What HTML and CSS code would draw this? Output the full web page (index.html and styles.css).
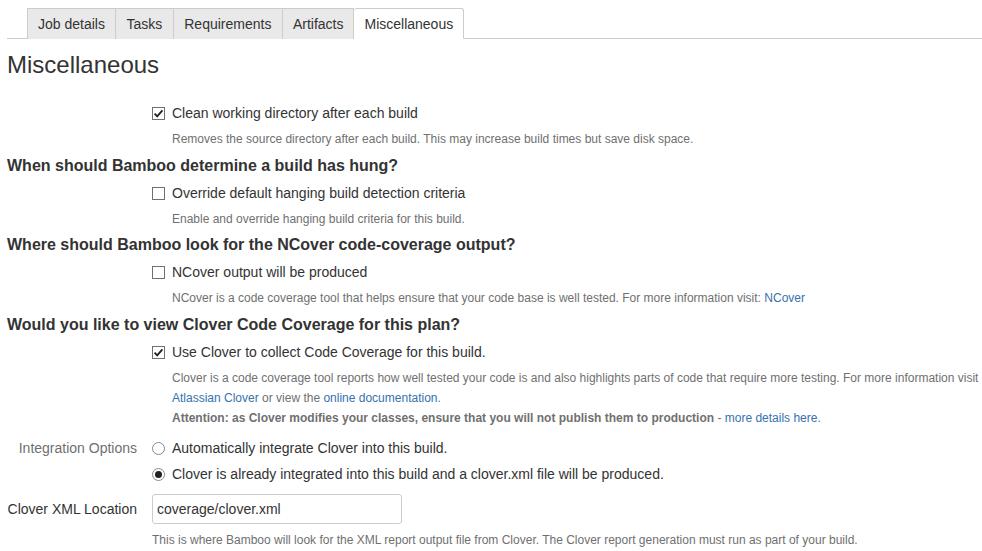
FILE: index.html
```html
<!DOCTYPE html>
<html>
<head>
<meta charset="utf-8">
<link rel="stylesheet" href="styles.css">
</head>
<body>
<div class="page">
  <ul class="tabs">
    <li class="tab">Job details</li>
    <li class="tab">Tasks</li>
    <li class="tab">Requirements</li>
    <li class="tab">Artifacts</li>
    <li class="tab active">Miscellaneous</li>
  </ul>
  <h1 class="title">Miscellaneous</h1>

  <div class="group first">
    <div class="check-row"><span class="cb checked"><svg viewBox="0 0 13 13" width="13" height="13"><path d="M2.6 6.6 L5.2 9.3 L10.4 3.4" fill="none" stroke="#222" stroke-width="1.9"/></svg></span><span class="label">Clean working directory after each build</span></div>
    <div class="desc">Removes the source directory after each build. This may increase build times but save disk space.</div>
  </div>

  <h2 class="section">When should Bamboo determine a build has hung?</h2>
  <div class="group tight">
    <div class="check-row"><span class="cb"></span><span class="label">Override default hanging build detection criteria</span></div>
    <div class="desc">Enable and override hanging build criteria for this build.</div>
  </div>

  <h2 class="section">Where should Bamboo look for the NCover code-coverage output?</h2>
  <div class="group">
    <div class="check-row"><span class="cb"></span><span class="label">NCover output will be produced</span></div>
    <div class="desc">NCover is a code coverage tool that helps ensure that your code base is well tested. For more information visit: <a class="link">NCover</a></div>
  </div>

  <h2 class="section">Would you like to view Clover Code Coverage for this plan?</h2>
  <div class="group">
    <div class="check-row"><span class="cb checked"><svg viewBox="0 0 13 13" width="13" height="13"><path d="M2.6 6.6 L5.2 9.3 L10.4 3.4" fill="none" stroke="#222" stroke-width="1.9"/></svg></span><span class="label">Use Clover to collect Code Coverage for this build.</span></div>
    <div class="desc">Clover is a code coverage tool reports how well tested your code is and also highlights parts of code that require more testing. For more information visit <a class="link">Atlassian Clover</a> or view the <a class="link">online documentation</a>.<br><strong>Attention: as Clover modifies your classes, ensure that you will not publish them to production</strong> - <a class="link">more details here</a>.</div>
  </div>

  <div class="form-row radios-row">
    <div class="form-label muted">Integration Options</div>
    <div class="form-field">
      <div class="radio-row"><span class="radio"></span><span class="label">Automatically integrate Clover into this build.</span></div>
      <div class="radio-row"><span class="radio on"></span><span class="label">Clover is already integrated into this build and a clover.xml file will be produced.</span></div>
    </div>
  </div>

  <div class="form-row input-row">
    <div class="form-label">Clover XML Location</div>
    <div class="form-field">
      <div class="text-input">coverage/clover.xml</div>
      <div class="desc plain">This is where Bamboo will look for the XML report output file from Clover. The Clover report generation must run as part of your build.</div>
    </div>
  </div>
</div>
</body>
</html>
```
FILE: styles.css
```css
* { box-sizing: border-box; }
html, body { margin: 0; padding: 0; background: #fff; }
body {
  font-family: Arial, "Liberation Sans", sans-serif;
  font-size: 14px;
  color: #333;
  width: 982px;
  overflow: hidden;
}
.page { padding: 8px 0 0 7px; }

.tabs {
  list-style: none;
  margin: 0;
  padding: 0 0 0 20px;
  display: flex;
  border-bottom: 1px solid #ccc;
  height: 31px;
}
.tab {
  height: 31px;
  line-height: 29px;
  padding: 1px 10px 0;
  background: #e9e9e9;
  border: 1px solid #ccc;
  border-left-width: 0;
  border-bottom: none;
  color: #333;
  font-size: 14px;
}
.tab:first-child { border-left-width: 1px; }
.tab:nth-child(2), .tab:nth-child(3) { padding-right: 10.5px; padding-left: 10.5px; }
.tab.active {
  background: #fff;
  height: 31px;
  border-radius: 3px 3px 0 0;
  border-bottom: 1px solid #fff;
}

.title {
  font-size: 24px;
  font-weight: normal;
  line-height: 28px;
  margin: 12px 0 0 0;
  color: #333;
}

.group { padding-left: 145px; margin-bottom: 7px; }
.group.first { margin-top: 24px; }
.group.tight { margin-bottom: 6px; }

.check-row, .radio-row {
  display: flex;
  align-items: center;
  height: 20px;
  line-height: 20px;
}
.label { margin-left: 7px; color: #333; }

.cb {
  width: 13px;
  height: 13px;
  border: 1px solid #707070;
  background: #fff;
  flex: none;
  position: relative;
  display: block;
}
.cb svg { position: absolute; left: -1px; top: -1px; }

.radio {
  width: 13px;
  height: 13px;
  border: 1px solid #8a8a8a;
  border-radius: 50%;
  background: #fff;
  flex: none;
  display: flex;
  align-items: center;
  justify-content: center;
}
.radio.on::after {
  content: "";
  width: 7px;
  height: 7px;
  border-radius: 50%;
  background: #222;
}

.desc {
  margin-top: 6px;
  padding-left: 20px;
  font-size: 12px;
  line-height: 20px;
  color: #707070;
}
.desc.plain { padding-left: 0; margin-top: 6px; }
.desc strong { font-weight: bold; }
.link { color: #3572b0; text-decoration: none; }

.section {
  font-size: 16px;
  font-weight: bold;
  line-height: 20px;
  margin: 0 0 7px 0;
  color: #333;
}

.form-row { display: flex; }
.form-label {
  width: 130px;
  text-align: right;
  flex: none;
  line-height: 20px;
  color: #333;
}
.form-label.muted { color: #707070; }
.form-field { margin-left: 15px; }
.radios-row { margin-top: 10px; }
.radios-row .radio-row + .radio-row { margin-top: 6px; }
.input-row { margin-top: 10px; }
.input-row .form-label { padding-top: 5px; }
.text-input {
  width: 250px;
  height: 30px;
  border: 1px solid #ccc;
  border-radius: 3px;
  padding: 0 4px;
  line-height: 28px;
  font-size: 14px;
  color: #333;
}
```
